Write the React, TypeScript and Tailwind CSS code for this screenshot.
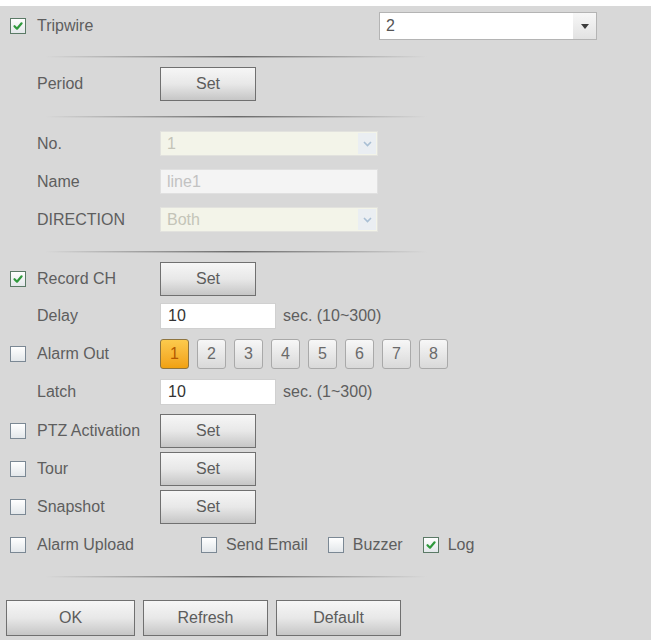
import React from "react";

const font = { fontFamily: '"Liberation Sans", Arial, sans-serif' };

function CheckBox({ checked }: { checked?: boolean }) {
  return (
    <div
      className={
        "w-[16px] h-[16px] shrink-0 border flex items-center justify-center bg-gradient-to-b from-[#ffffff] to-[#e3e7ea] " +
        (checked ? "border-[#5b7a66]" : "border-[#7b8894]")
      }
    >
      {checked && (
        <svg width="12" height="12" viewBox="0 0 12 12">
          <path d="M2.5 6.2 L5 8.7 L9.6 3.3" fill="none" stroke="#2f9a3c" strokeWidth="2.2" strokeLinecap="round" strokeLinejoin="round" />
        </svg>
      )}
    </div>
  );
}

function Sep({ mt }: { mt: string }) {
  return (
    <div className={mt + " ml-[45px] w-[382px]"}>
      <div className="h-[1px] bg-gradient-to-r from-transparent via-[#6a6a6a] to-transparent" />
      <div className="h-[1px] bg-gradient-to-r from-transparent via-[#a8a8a8] to-transparent" />
    </div>
  );
}

function SetBtn({ label = "Set", w = "w-[96px]", h = "h-[34px]" }: { label?: string; w?: string; h?: string }) {
  return (
    <div
      className={
        w +
        " " +
        h +
        " border border-[#707070] bg-gradient-to-b from-[#f6f6f6] via-[#e8e8e8] to-[#c6c6c6] flex items-center justify-center text-[#5c5c5c] text-[16px]"
      }
    >
      {label}
    </div>
  );
}

function Row({
  check,
  label,
  children,
  className = "",
}: {
  check?: "on" | "off";
  label: string;
  children?: React.ReactNode;
  className?: string;
}) {
  return (
    <div className={"flex items-center " + className}>
      <div className="w-[160px] flex items-center shrink-0">
        {check ? (
          <div className="pl-[10px] pr-[11px]">
            <CheckBox checked={check === "on"} />
          </div>
        ) : (
          <div className="w-[37px]" />
        )}
        <span className="text-[16px] text-[#5e5e5e] whitespace-nowrap">{label}</span>
      </div>
      {children}
    </div>
  );
}

function DisabledSelect({ value }: { value: string }) {
  return (
    <div className="w-[218px] h-[25px] border border-[#e2e2de] bg-[#f3f4e9] flex items-center">
      <span className="flex-1 pl-[6px] text-[16px] text-[#c4c4b8]">{value}</span>
      <div className="w-[18px] h-[21px] mr-[1px] bg-[#eaeef2] flex items-center justify-center">
        <svg width="9" height="6" viewBox="0 0 9 6">
          <path d="M1 1 L4.5 4.5 L8 1" fill="none" stroke="#a9bfd4" strokeWidth="1.6" />
        </svg>
      </div>
    </div>
  );
}

function TextInput({ value }: { value: string }) {
  return (
    <div className="w-[116px] h-[26px] bg-white border border-[#d0d0d0] flex items-center pl-[7px] text-[16px] text-[#333]">
      {value}
    </div>
  );
}

export default function App() {
  const nums = ["1", "2", "3", "4", "5", "6", "7", "8"];
  return (
    <div style={font} className="w-[651px] h-[640px] bg-[#d8d8d8] border-t-[6px] border-white overflow-hidden">
      {/* Tripwire */}
      <div className="mt-[6px] flex items-center h-[28px]">
        <div className="pl-[10px] pr-[11px]">
          <CheckBox checked />
        </div>
        <span className="text-[16px] text-[#5e5e5e]">Tripwire</span>
        <div className="ml-auto mr-[54px] w-[218px] h-[28px] bg-white border border-[#b4b4b4] flex items-center">
          <span className="flex-1 pl-[6px] text-[16px] text-[#555]">2</span>
          <div className="w-[23px] h-[26px] bg-gradient-to-b from-[#f7f7f7] to-[#e2e2e2] flex items-center justify-center">
            <svg width="8" height="5" viewBox="0 0 8 5">
              <path d="M0 0 L8 0 L4 5 Z" fill="#3c3c3c" />
            </svg>
          </div>
        </div>
      </div>

      <Sep mt="mt-[16px]" />

      <Row label="Period" className="mt-[9px]">
        <SetBtn />
      </Row>

      <Sep mt="mt-[15px]" />

      <Row label="No." className="mt-[13px]">
        <DisabledSelect value="1" />
      </Row>
      <Row label="Name" className="mt-[13px]">
        <div className="w-[218px] h-[25px] border border-[#e0e0e0] bg-[#f4f4f4] flex items-center pl-[6px] text-[16px] text-[#c2c2c2]">
          line1
        </div>
      </Row>
      <Row label="DIRECTION" className="mt-[13px]">
        <DisabledSelect value="Both" />
      </Row>

      <Sep mt="mt-[19px]" />

      <Row check="on" label="Record CH" className="mt-[9px]">
        <SetBtn />
      </Row>
      <Row label="Delay" className="mt-[7px]">
        <TextInput value="10" />
        <span className="ml-[7px] text-[16px] text-[#5e5e5e]">sec. (10~300)</span>
      </Row>
      <Row check="off" label="Alarm Out" className="mt-[10px]">
        <div className="flex gap-[8px]">
          {nums.map((n) =>
            n === "1" ? (
              <div
                key={n}
                className="w-[29px] h-[30px] rounded-[3px] border border-[#8f7540] bg-gradient-to-b from-[#fcca4c] to-[#f1a10e] flex items-center justify-center text-[16px] text-[#b45800]"
              >
                {n}
              </div>
            ) : (
              <div
                key={n}
                className="w-[29px] h-[30px] rounded-[3px] border border-[#a9a9a9] bg-gradient-to-b from-[#f7f7f7] to-[#d9d9d9] flex items-center justify-center text-[16px] text-[#6a6a6a]"
              >
                {n}
              </div>
            )
          )}
        </div>
      </Row>
      <Row label="Latch" className="mt-[10px]">
        <TextInput value="10" />
        <span className="ml-[7px] text-[16px] text-[#5e5e5e]">sec. (1~300)</span>
      </Row>
      <Row check="off" label="PTZ Activation" className="mt-[9px]">
        <SetBtn />
      </Row>
      <Row check="off" label="Tour" className="mt-[4px]">
        <SetBtn />
      </Row>
      <Row check="off" label="Snapshot" className="mt-[4px]">
        <SetBtn />
      </Row>

      {/* Alarm upload row */}
      <div className="mt-[11px] h-[20px] flex items-center text-[16px] text-[#5e5e5e]">
        <div className="pl-[10px] pr-[11px]">
          <CheckBox />
        </div>
        <span className="w-[164px]">Alarm Upload</span>
        <CheckBox />
        <span className="ml-[9px]">Send Email</span>
        <div className="ml-[20px]">
          <CheckBox />
        </div>
        <span className="ml-[9px]">Buzzer</span>
        <div className="ml-[20px]">
          <CheckBox checked />
        </div>
        <span className="ml-[9px]">Log</span>
      </div>

      <Sep mt="mt-[21px]" />

      <div className="mt-[22px] ml-[6px] flex gap-[8px]">
        <SetBtn label="OK" w="w-[129px]" h="h-[36px]" />
        <SetBtn label="Refresh" w="w-[125px]" h="h-[36px]" />
        <SetBtn label="Default" w="w-[125px]" h="h-[36px]" />
      </div>
    </div>
  );
}
